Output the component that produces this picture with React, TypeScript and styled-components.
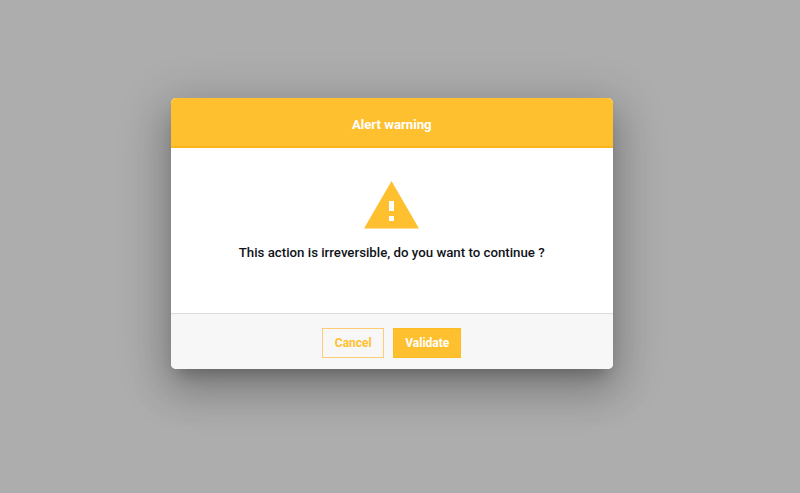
import React from "react";
import styled, { createGlobalStyle } from "styled-components";

const GlobalStyle = createGlobalStyle`
  *, *::before, *::after { box-sizing: border-box; }
  body { margin: 0; font-family: Roboto, sans-serif; }
`;

const Overlay = styled.main`
  display: flex;
  align-items: flex-start;
  justify-content: center;
  height: 100vh;
  padding: 98px 16.5px 0 0;
  background: #adadad;
  overflow: hidden;
`;

const Dialog = styled.section`
  display: flex;
  flex-direction: column;
  width: 441.5px;
  height: 270.5px;
  border-radius: 5px;
  background: #fff;
  overflow: hidden;
  box-shadow:
    0 11px 15px -7px rgba(0, 0, 0, 0.24),
    0 20px 38px 3px rgba(0, 0, 0, 0.16),
    0 11px 50px 8px rgba(0, 0, 0, 0.16);
`;

const Header = styled.header`
  display: flex;
  align-items: center;
  justify-content: center;
  flex: 0 0 50px;
  padding-top: 5px;
  border-bottom: 2px solid #f9b51b;
  background: #ffc02f;
`;

const Title = styled.h1`
  margin: 0;
  color: #fff;
  font-size: 13.2px;
  line-height: 18px;
  font-weight: 700;
`;

const Body = styled.div`
  display: flex;
  flex: 1;
  flex-direction: column;
  align-items: center;
  padding-top: 33px;
`;

const WarningIcon = styled.svg`
  display: block;
  width: 55px;
  height: 47.5px;
  fill: #ffc02f;
`;

const Message = styled.p`
  margin: 14.5px 0 0;
  color: #10131a;
  font-size: 13.25px;
  line-height: 20px;
  font-weight: 500;
  white-space: nowrap;
`;

const Footer = styled.footer`
  display: flex;
  align-items: flex-start;
  justify-content: center;
  gap: 9px;
  flex: 0 0 55.5px;
  padding-top: 14px;
  border-top: 1px solid #dcdcdc;
  background: #f7f7f7;
`;

const Button = styled.button<{ $filled?: boolean }>`
  width: ${({ $filled }) => ($filled ? 68 : 62)}px;
  height: 30px;
  padding: 0 0 1px;
  border: 1px solid ${({ $filled }) => ($filled ? "#ffbc22" : "#ffcc73")};
  background: ${({ $filled }) => ($filled ? "#ffc02f" : "transparent")};
  color: ${({ $filled }) => ($filled ? "#fff" : "#ffc02f")};
  font: 700 12px/18px Roboto, sans-serif;
`;

export default function App() {
  return (
    <>
      <GlobalStyle />
      <Overlay>
        <Dialog role="alertdialog" aria-labelledby="title">
          <Header><Title id="title">Alert warning</Title></Header>
          <Body>
            <WarningIcon viewBox="1 2 22 19" preserveAspectRatio="none" aria-hidden="true">
              <path d="M1 21h22L12 2 1 21zm12-3h-2v-2h2v2zm0-4h-2v-4h2v4z" />
            </WarningIcon>
            <Message>This action is irreversible, do you want to continue ?</Message>
          </Body>
          <Footer>
            <Button>Cancel</Button>
            <Button $filled>Validate</Button>
          </Footer>
        </Dialog>
      </Overlay>
    </>
  );
}
